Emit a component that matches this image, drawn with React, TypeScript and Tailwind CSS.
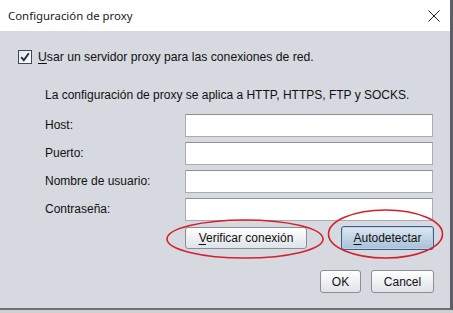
import React from "react";

const FONT = { fontFamily: '"Liberation Sans", Arial, sans-serif' };

function Mnemonic({ text }: { text: string }) {
  return (
    <>
      <span className="underline underline-offset-2">{text[0]}</span>
      {text.slice(1)}
    </>
  );
}

function CheckBox() {
  return (
    <svg width="14" height="14" viewBox="0 0 14 14">
      <defs>
        <linearGradient id="cb" x1="0" y1="0" x2="1" y2="1">
          <stop offset="0" stopColor="#dfe6ee" />
          <stop offset="1" stopColor="#ffffff" />
        </linearGradient>
      </defs>
      <rect x="0.5" y="0.5" width="13" height="13" fill="url(#cb)" stroke="#3c4a5a" />
      <path d="M3.2 7.2 L5.8 10.2 L10.8 3.2" fill="none" stroke="#1d2c3e" strokeWidth="1.9" />
    </svg>
  );
}

function Field({ label }: { label: string }) {
  return (
    <div className="flex items-center h-[28px]">
      <span className="w-[140px] text-[12px] text-[#111]">{label}</span>
      <div className="w-[248px] h-[23px] bg-white border border-[#a9adb3] border-t-[#8e9297]" />
    </div>
  );
}

export default function App() {
  return (
    <div className="w-[453px] h-[313px] overflow-hidden bg-[#cfd0d2] relative" style={FONT}>
      <div className="flex h-[310px]">
        <div className="w-[450px] flex flex-col bg-[#d6d9df] border-b-2 border-[#6d6f73]">
          {/* Title bar */}
          <div className="h-[31px] bg-white flex items-center justify-between pl-[8px] pr-[10px]">
            <span className="text-[11.4px] text-[#1a1a1a]" style={{ fontFamily: '"Noto Sans", "Open Sans", sans-serif' }}>
              Configuración de proxy
            </span>
            <svg width="12" height="12" viewBox="0 0 12 12">
              <path d="M0.5 0.5 L11.5 11.5 M11.5 0.5 L0.5 11.5" stroke="#222" strokeWidth="1" />
            </svg>
          </div>

          {/* Body */}
          <div className="flex items-center gap-[6px] pl-[18px] mt-[18px] h-[16px]">
            <CheckBox />
            <span className="text-[12.2px] text-[#111]">
              <Mnemonic text="Usar un servidor proxy para las conexiones de red." />
            </span>
          </div>

          <div className="pl-[45px] mt-[22px] text-[12px] text-[#111] leading-[16px]">
            La configuración de proxy se aplica a HTTP, HTTPS, FTP y SOCKS.
          </div>

          <div className="pl-[45px] mt-[8px] flex flex-col">
            <Field label="Host:" />
            <Field label="Puerto:" />
            <Field label="Nombre de usuario:" />
            <Field label="Contraseña:" />
          </div>

          <div className="flex items-center pl-[185px] mt-[3px] gap-[34px]">
            <button className="w-[122px] h-[22px] rounded-[3px] border border-[#8a8f96] bg-gradient-to-b from-[#ffffff] to-[#dfe3e8] text-[12px] text-[#111]">
              <Mnemonic text="Verificar conexión" />
            </button>
            <button className="w-[93px] h-[24px] rounded-[3px] border border-[#3d5f86] bg-gradient-to-b from-[#dde8f3] to-[#a9c0d8] text-[12px] text-[#111] shadow-[inset_0_0_0_1px_#b9d0e8]">
              <Mnemonic text="Autodetectar" />
            </button>
          </div>

          <div className="flex justify-end gap-[10px] pr-[16px] mt-[20px]">
            <button className="w-[41px] h-[23px] rounded-[3px] border border-[#8a8f96] bg-gradient-to-b from-[#ffffff] to-[#dfe3e8] text-[12px] text-[#111]">
              OK
            </button>
            <button className="w-[63px] h-[23px] rounded-[3px] border border-[#8a8f96] bg-gradient-to-b from-[#ffffff] to-[#dfe3e8] text-[12px] text-[#111]">
              Cancel
            </button>
          </div>
        </div>
        <div className="flex-1 bg-[#5c6066]" />
      </div>

      {/* Red annotation ellipses */}
      <svg className="absolute left-0 top-0 pointer-events-none" width="453" height="313">
        <ellipse cx="245" cy="239" rx="78" ry="19" fill="none" stroke="#d4212b" strokeWidth="1.6" />
        <ellipse cx="385.5" cy="234" rx="57" ry="24" fill="none" stroke="#d4212b" strokeWidth="1.6" />
      </svg>
    </div>
  );
}
